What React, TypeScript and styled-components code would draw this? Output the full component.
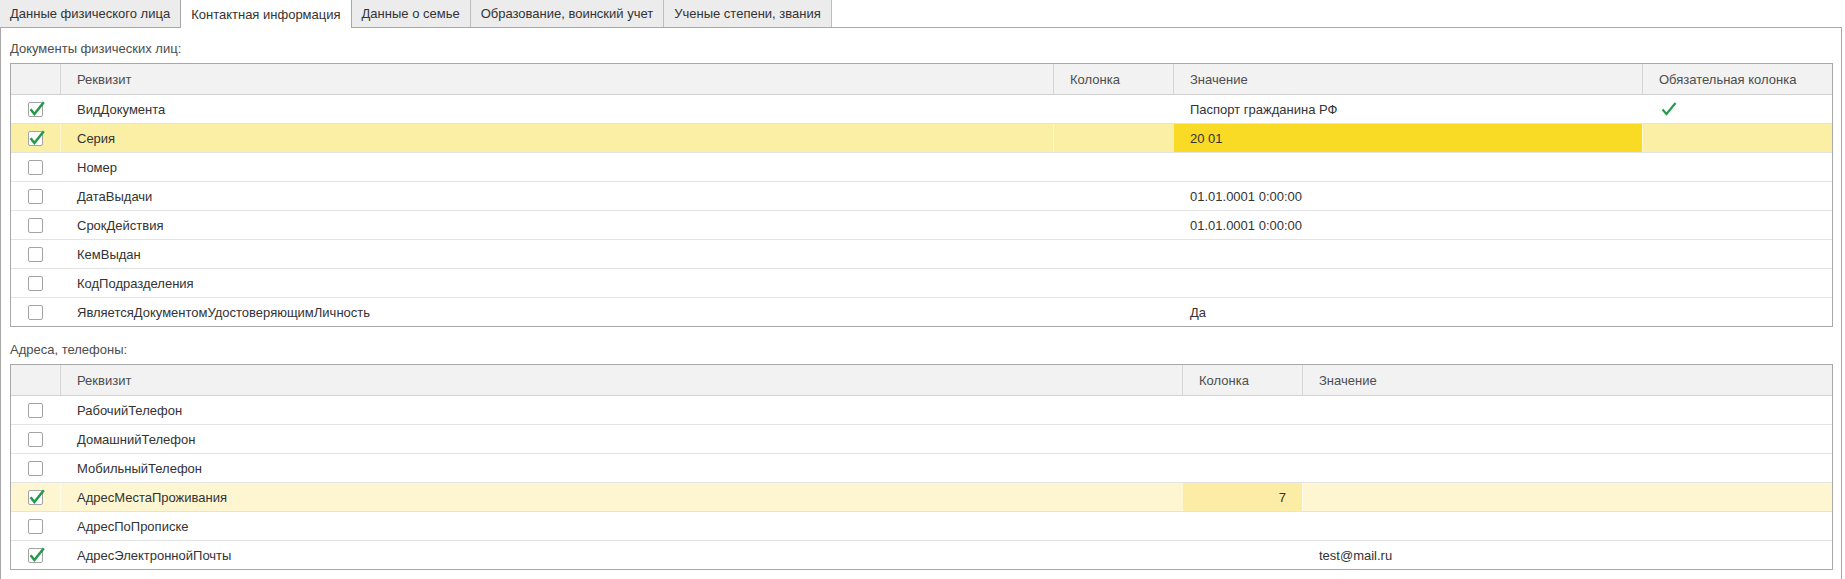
import React from "react";
import styled, { createGlobalStyle, css } from "styled-components";

const GlobalStyle = createGlobalStyle`
	html, body {
		margin: 0;
		padding: 0;
		background: #fff;
	}
	body {
		font-family: "Liberation Sans", Arial, sans-serif;
		font-size: 13px;
		color: #333;
	}
`;

const StyledPage = styled.div`
	width: 1845px;
	height: 579px;
	overflow: hidden;
	padding-right: 3px;
	box-sizing: border-box;
`;

const StyledTabBar = styled.div`
	display: flex;
	height: 27px;
	border-bottom: 1px solid #a8a8a8;
`;

const StyledTab = styled.div<{ $active?: boolean }>`
	display: flex;
	align-items: center;
	height: 27px;
	padding: 0 10px;
	box-sizing: border-box;
	background: #ececec;
	border-right: 1px solid #bdbdbd;
	color: #333;
	white-space: nowrap;

	${({ $active }) =>
		$active &&
		css`
			height: 28px;
			margin-bottom: -1px;
			margin-left: -1px;
			background: #fff;
			border-left: 1px solid #a8a8a8;
			border-right: 1px solid #a8a8a8;
		`}
`;

const StyledPanel = styled.div`
	border-left: 1px solid #a8a8a8;
	border-right: 1px solid #a8a8a8;
	padding: 13px 8px 9px 9px;
`;

const StyledLabel = styled.div<{ $gap?: boolean }>`
	height: 15px;
	line-height: 15px;
	margin-top: ${({ $gap }) => ($gap ? "15px" : "0")};
	margin-bottom: 7px;
	color: #4d4d4d;
`;

const StyledTable = styled.div`
	border: 1px solid #a8a8a8;
`;

const StyledGridRow = styled.div<{ $cols: string }>`
	display: grid;
	grid-template-columns: ${({ $cols }) => $cols};
`;

const StyledHeader = styled(StyledGridRow)`
	height: 30px;
	background: #f2f2f2;
	border-bottom: 1px solid #d2d2d2;
	color: #4d4d4d;
`;

const StyledHeaderCell = styled.div<{ $first?: boolean }>`
	display: flex;
	align-items: center;
	padding: 0 16px;
	border-left: ${({ $first }) => ($first ? "none" : "1px solid #d6d6d6")};
	white-space: nowrap;
	overflow: hidden;
`;

const StyledRow = styled(StyledGridRow)<{ $selected?: "strong" | "soft" }>`
	height: 28px;
	border-bottom: 1px solid #e3e3e3;
	background: ${({ $selected }) =>
		$selected === "strong" ? "#fbefa5" : $selected === "soft" ? "#fdf6d1" : "#fff"};

	&:last-child {
		border-bottom: none;
	}
`;

const StyledCell = styled.div<{
	$right?: boolean;
	$fill?: string;
	$divider?: boolean;
	$center?: boolean;
}>`
	display: flex;
	align-items: center;
	justify-content: ${({ $right, $center }) =>
		$right ? "flex-end" : $center ? "center" : "flex-start"};
	padding: ${({ $center }) => ($center ? "0" : "0 16px")};
	background: ${({ $fill }) => $fill || "transparent"};
	border-left: 1px solid
		${({ $divider }) => ($divider ? "rgba(255, 255, 255, 0.55)" : "transparent")};
	white-space: nowrap;
	overflow: hidden;
`;

const StyledMarkCell = styled(StyledCell)`
	padding-left: 18px;
`;

const CheckBox = ({ checked }: { checked: boolean }) => (
	<svg width="18" height="18" viewBox="0 0 18 18" style={{ marginLeft: 2 }}>
		<rect
			x="0.5"
			y="2.5"
			width="14"
			height="14"
			rx="1.5"
			fill="#fff"
			stroke="#a3a3a3"
		/>
		{checked && (
			<path
				d="M2.6 9.2 L6.4 14 L15.8 2.2"
				fill="none"
				stroke="#23994a"
				strokeWidth="2.5"
				strokeLinejoin="miter"
			/>
		)}
	</svg>
);

const RequiredMark = () => (
	<svg width="16" height="16" viewBox="0 0 16 16">
		<path
			d="M1.5 8.5 L5.5 13 L14.5 2"
			fill="none"
			stroke="#2a9a4c"
			strokeWidth="2.2"
		/>
	</svg>
);

type Selection = "strong" | "soft" | undefined;

interface DocRow {
	name: string;
	checked: boolean;
	value?: string;
	required?: boolean;
	selected?: Selection;
}

interface AddrRow {
	name: string;
	checked: boolean;
	column?: string;
	value?: string;
	selected?: Selection;
}

const docCols = "49px 1fr 120px 469px 190px";
const addrCols = "49px 1fr 120px 530px";

const docRows: DocRow[] = [
	{ name: "ВидДокумента", checked: true, value: "Паспорт гражданина РФ", required: true },
	{ name: "Серия", checked: true, value: "20 01", selected: "strong" },
	{ name: "Номер", checked: false },
	{ name: "ДатаВыдачи", checked: false, value: "01.01.0001 0:00:00" },
	{ name: "СрокДействия", checked: false, value: "01.01.0001 0:00:00" },
	{ name: "КемВыдан", checked: false },
	{ name: "КодПодразделения", checked: false },
	{ name: "ЯвляетсяДокументомУдостоверяющимЛичность", checked: false, value: "Да" },
];

const addrRows: AddrRow[] = [
	{ name: "РабочийТелефон", checked: false },
	{ name: "ДомашнийТелефон", checked: false },
	{ name: "МобильныйТелефон", checked: false },
	{ name: "АдресМестаПроживания", checked: true, column: "7", selected: "soft" },
	{ name: "АдресПоПрописке", checked: false },
	{ name: "АдресЭлектроннойПочты", checked: true, value: "test@mail.ru" },
];

const tabs = [
	"Данные физического лица",
	"Контактная информация",
	"Данные о семье",
	"Образование, воинский учет",
	"Ученые степени, звания",
];

const App = () => {
	return (
		<StyledPage>
			<GlobalStyle />
			<StyledTabBar>
				{tabs.map((title, i) => (
					<StyledTab key={i} $active={i === 1}>
						{title}
					</StyledTab>
				))}
			</StyledTabBar>
			<StyledPanel>
				<StyledLabel>Документы физических лиц:</StyledLabel>
				<StyledTable>
					<StyledHeader $cols={docCols}>
						<StyledHeaderCell $first />
						<StyledHeaderCell>Реквизит</StyledHeaderCell>
						<StyledHeaderCell>Колонка</StyledHeaderCell>
						<StyledHeaderCell>Значение</StyledHeaderCell>
						<StyledHeaderCell>Обязательная колонка</StyledHeaderCell>
					</StyledHeader>
					{docRows.map((row, i) => {
						const sel = !!row.selected;
						return (
							<StyledRow key={i} $cols={docCols} $selected={row.selected}>
								<StyledCell $center>
									<CheckBox checked={row.checked} />
								</StyledCell>
								<StyledCell $divider={sel}>{row.name}</StyledCell>
								<StyledCell $divider={sel} />
								<StyledCell $divider={sel} $fill={sel ? "#f9da25" : undefined}>
									{row.value}
								</StyledCell>
								<StyledMarkCell $divider={sel}>
									{row.required && <RequiredMark />}
								</StyledMarkCell>
							</StyledRow>
						);
					})}
				</StyledTable>

				<StyledLabel $gap>Адреса, телефоны:</StyledLabel>
				<StyledTable>
					<StyledHeader $cols={addrCols}>
						<StyledHeaderCell $first />
						<StyledHeaderCell>Реквизит</StyledHeaderCell>
						<StyledHeaderCell>Колонка</StyledHeaderCell>
						<StyledHeaderCell>Значение</StyledHeaderCell>
					</StyledHeader>
					{addrRows.map((row, i) => {
						const sel = !!row.selected;
						return (
							<StyledRow key={i} $cols={addrCols} $selected={row.selected}>
								<StyledCell $center>
									<CheckBox checked={row.checked} />
								</StyledCell>
								<StyledCell $divider={sel}>{row.name}</StyledCell>
								<StyledCell $right $divider={sel} $fill={sel ? "#fbeda5" : undefined}>
									{row.column}
								</StyledCell>
								<StyledCell $divider={sel}>{row.value}</StyledCell>
							</StyledRow>
						);
					})}
				</StyledTable>
			</StyledPanel>
		</StyledPage>
	);
};

export default App;
